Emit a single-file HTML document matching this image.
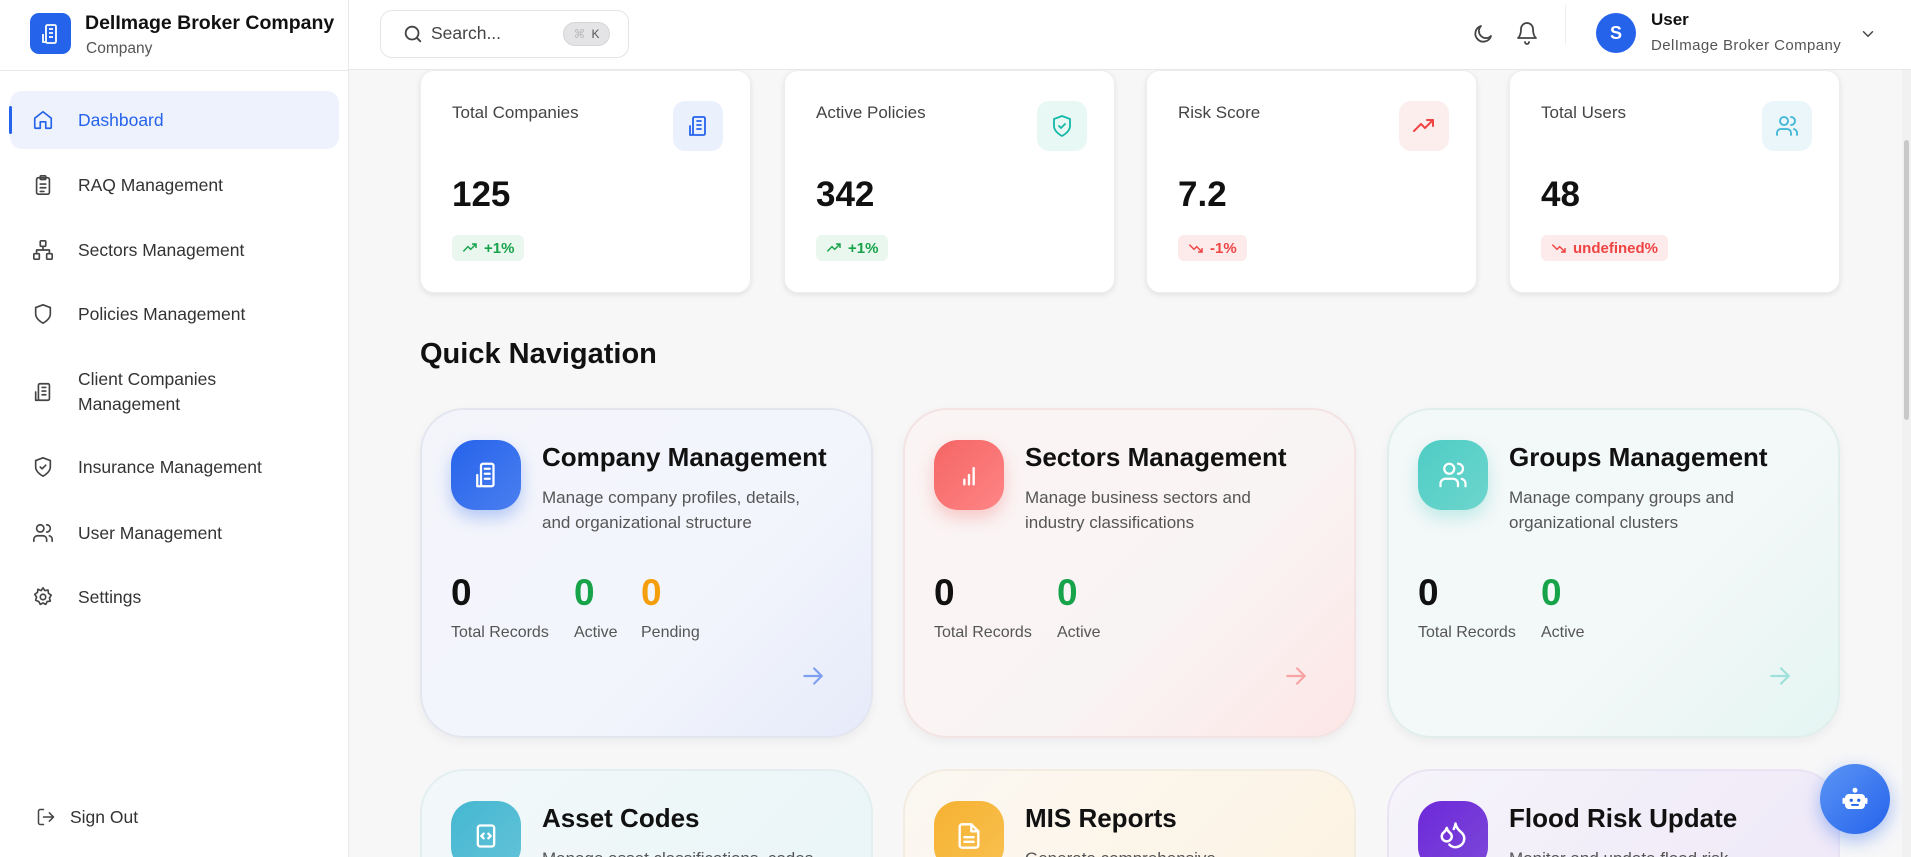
<!DOCTYPE html>
<html style="width:1911px;height:857px;overflow:hidden"><head><meta charset="utf-8"><style>
*{box-sizing:border-box;margin:0;padding:0}
body{width:1911px;height:857px;overflow:hidden;font-family:"Liberation Sans",sans-serif;background:#f7f7f8;position:relative;color:#111}
#w{position:absolute;left:0;top:0;width:1911px;height:857px;overflow:hidden}
.a{position:absolute}
.sb{left:0;top:0;width:349px;height:857px;background:#fff;border-right:1px solid #e8e8ea}
.hd{left:349px;top:0;width:1562px;height:70px;background:#fff;border-bottom:1px solid #e8e8ea;z-index:5}
.nav{left:10px;width:329px;height:58px;display:flex;align-items:center;padding-left:22px;font-size:17.5px;color:#333}
.nav svg{width:22px;height:22px;margin-right:24px;stroke:#444;fill:none;stroke-width:1.8;stroke-linecap:round;stroke-linejoin:round}
.sc{width:331px;height:223px;top:70px;background:#fff;border-radius:14px;box-shadow:0 2px 6px rgba(0,0,0,.09);border:1px solid #eee}
.sc .l{position:absolute;left:31px;top:32px;font-size:17px;color:#444}
.sc .n{position:absolute;left:31px;top:104px;font-size:35px;font-weight:bold}
.sc .ib{position:absolute;left:252px;top:30px;width:50px;height:50px;border-radius:12px;display:flex;align-items:center;justify-content:center}
.sc .bd{position:absolute;left:31px;top:164px;height:26px;border-radius:6px;padding:0 10px;font-size:15px;font-weight:bold;display:flex;align-items:center;gap:6px}
.ib svg,.ic svg{fill:none;stroke-linecap:round;stroke-linejoin:round}
.qc{width:453px;height:330px;border-radius:44px;border:2px solid #e4e6ef;box-shadow:0 4px 10px rgba(0,0,0,.05);overflow:hidden}
.qc.b{height:88px;border-bottom:none;border-radius:44px 44px 0 0;box-shadow:none}
.qc .ic{position:absolute;left:29px;top:30px;width:70px;height:70px;border-radius:24px;display:flex;align-items:center;justify-content:center}
.qc .t{position:absolute;left:120px;top:32px;font-size:26px;font-weight:bold;color:#111}
.qc .d{position:absolute;left:120px;top:75px;font-size:17px;line-height:25px;color:#555;width:285px}
.qc .v{position:absolute;top:162px;font-size:37px;font-weight:bold}
.qc .k{position:absolute;top:214px;font-size:16px;color:#555}
.qc .ar{position:absolute;left:378px;top:253px}
</style></head><body><div id="w">
<div class="a sb">
 <div class="a" style="left:0;top:70px;width:349px;border-top:1px solid #e8e8ea"></div>
 <div class="a" style="left:30px;top:13px;width:41px;height:41px;background:#2563eb;border-radius:9px;display:flex;align-items:center;justify-content:center"><svg width="24" height="24" viewBox="0 0 24 24" fill="none" stroke="#fff" stroke-width="1.8"><rect x="7" y="3" width="10" height="18" rx="1.5"/><path d="M4 12v8h3M10 7h4M10 11h4M10 15h4"/></svg></div>
 <div class="a" style="left:85px;top:12px;font-size:19.5px;font-weight:bold">DelImage Broker Company</div>
 <div class="a" style="left:86px;top:40px;font-size:15.5px;color:#555">Company</div>
 <div class="a nav" style="top:91px;background:#eef2fc;border-radius:12px;color:#2563eb"><svg viewBox="0 0 24 24" style="stroke:#2563eb"><path d="M3 10l9-7 9 7v10a1 1 0 0 1-1 1h-5v-7h-6v7H4a1 1 0 0 1-1-1z"/></svg>Dashboard</div>
 <div class="a" style="left:9px;top:106px;width:3px;height:28px;background:#2563eb;border-radius:2px"></div>
 <div class="a nav" style="top:156px"><svg viewBox="0 0 24 24"><rect x="5" y="4" width="14" height="18" rx="2"/><rect x="9" y="2" width="6" height="4" rx="1"/><path d="M9 11h6M9 15h6M9 19h4"/></svg>RAQ Management</div>
 <div class="a nav" style="top:221px"><svg viewBox="0 0 24 24"><rect x="9" y="2" width="6" height="6" rx="1"/><rect x="2" y="16" width="6" height="6" rx="1"/><rect x="16" y="16" width="6" height="6" rx="1"/><path d="M5 16v-4h14v4M12 8v4"/></svg>Sectors Management</div>
 <div class="a nav" style="top:285px"><svg viewBox="0 0 24 24"><path d="M12 22s8-4 8-10V5l-8-3-8 3v7c0 6 8 10 8 10z"/></svg>Policies Management</div>
 <div class="a nav" style="top:364px;height:55px;line-height:25px"><svg viewBox="0 0 24 24"><rect x="7" y="3" width="12" height="18" rx="1.5"/><path d="M4 12v9h3M11 7h4M11 11h4M11 15h4"/></svg><span>Client Companies<br>Management</span></div>
 <div class="a nav" style="top:438px"><svg viewBox="0 0 24 24"><path d="M12 22s8-4 8-10V5l-8-3-8 3v7c0 6 8 10 8 10z"/><path d="M9 12l2 2 4-4"/></svg>Insurance Management</div>
 <div class="a nav" style="top:504px"><svg viewBox="0 0 24 24"><circle cx="9" cy="7" r="4"/><path d="M2 21v-2a4 4 0 0 1 4-4h6a4 4 0 0 1 4 4v2M16 3a4 4 0 0 1 0 8M22 21v-2a4 4 0 0 0-3-3.9"/></svg>User Management</div>
 <div class="a nav" style="top:568px"><svg viewBox="0 0 24 24"><circle cx="12" cy="12" r="3"/><path d="M12 2l2 3 3.5-.5.5 3.5 3 2-2 3 1 3.5-3.5.5-1.5 3-3-1.5-3 1.5-1.5-3L4 15.5l1-3.5-2-3 3-2 .5-3.5L10 5z"/></svg>Settings</div>
 <div class="a nav" style="top:788px;padding-left:26px"><svg viewBox="0 0 24 24" style="margin-right:14px;width:20px"><path d="M9 21H5a2 2 0 0 1-2-2V5a2 2 0 0 1 2-2h4M16 17l5-5-5-5M21 12H9"/></svg>Sign Out</div>
</div>
<div class="a hd">
 <div class="a" style="left:31px;top:10px;width:249px;height:48px;border:1px solid #e5e5e7;border-radius:12px"></div>
 <svg class="a" style="left:53px;top:23px" width="22" height="22" viewBox="0 0 24 24" fill="none" stroke="#444" stroke-width="2" stroke-linecap="round"><circle cx="11" cy="11" r="7"/><path d="M20 20l-4-4"/></svg>
 <div class="a" style="left:82px;top:23px;font-size:17.5px;color:#444">Search...</div>
 <div class="a" style="left:214px;top:22px;width:47px;height:24px;background:#e4e4e6;border-radius:12px;font-size:12px;color:#555;display:flex;align-items:center;justify-content:center;gap:6px;border:1px solid #d6d6d8"><span style="color:#bbb">⌘</span>K</div>
 <svg class="a" style="left:1122px;top:22px" width="24" height="24" viewBox="0 0 24 24" fill="none" stroke="#444" stroke-width="1.8" stroke-linecap="round" stroke-linejoin="round"><path d="M20 14A8 8 0 1 1 10 4a6 6 0 0 0 10 10z"/></svg>
 <svg class="a" style="left:1166px;top:21px" width="24" height="24" viewBox="0 0 24 24" fill="none" stroke="#444" stroke-width="1.8" stroke-linecap="round" stroke-linejoin="round"><path d="M6 8a6 6 0 0 1 12 0c0 7 3 9 3 9H3s3-2 3-9M10 21a2 2 0 0 0 4 0"/></svg>
 <div class="a" style="left:1216px;top:5px;width:1px;height:40px;background:#eee"></div>
 <div class="a" style="left:1247px;top:13px;width:40px;height:40px;border-radius:50%;background:#2563eb;color:#fff;font-weight:bold;font-size:18px;display:flex;align-items:center;justify-content:center">S</div>
 <div class="a" style="left:1302px;top:10px;font-size:17px;font-weight:bold">User</div>
 <div class="a" style="left:1302px;top:37px;font-size:15px;color:#555;letter-spacing:.4px">DelImage Broker Company</div>
 <svg class="a" style="left:1510px;top:25px" width="18" height="18" viewBox="0 0 24 24" fill="none" stroke="#444" stroke-width="2" stroke-linecap="round"><path d="M6 9l6 6 6-6"/></svg>
</div>

<div class="a sc" style="left:420px"><div class="l">Total Companies</div><div class="ib" style="background:#eaf0fc"><svg width="24" height="24" viewBox="0 0 24 24" stroke="#2563eb" stroke-width="1.8"><rect x="7" y="3" width="12" height="18" rx="1.5"/><path d="M4 12v9h3M11 7h4M11 11h4M11 15h4"/></svg></div><div class="n">125</div><div class="bd" style="background:#e9f7ee;color:#16a34a"><svg width="16" height="16" viewBox="0 0 24 24" fill="none" stroke="#16a34a" stroke-width="2.2"><path d="M2 17l7-7 4 4 8-8M15 6h6v6"/></svg>+1%</div></div>
<div class="a sc" style="left:784px"><div class="l">Active Policies</div><div class="ib" style="background:#e8f8f5"><svg width="24" height="24" viewBox="0 0 24 24" stroke="#14b8a6" stroke-width="1.8"><path d="M12 22s8-4 8-10V5l-8-3-8 3v7c0 6 8 10 8 10z"/><path d="M9 12l2 2 4-4"/></svg></div><div class="n">342</div><div class="bd" style="background:#e9f7ee;color:#16a34a"><svg width="16" height="16" viewBox="0 0 24 24" fill="none" stroke="#16a34a" stroke-width="2.2"><path d="M2 17l7-7 4 4 8-8M15 6h6v6"/></svg>+1%</div></div>
<div class="a sc" style="left:1146px"><div class="l">Risk Score</div><div class="ib" style="background:#fdeeee"><svg width="24" height="24" viewBox="0 0 24 24" stroke="#ef4444" stroke-width="2"><path d="M2 17l7-7 4 4 8-8M15 6h6v6"/></svg></div><div class="n">7.2</div><div class="bd" style="background:#fdeaea;color:#ef4444"><svg width="16" height="16" viewBox="0 0 24 24" fill="none" stroke="#ef4444" stroke-width="2.2"><path d="M2 7l7 7 4-4 8 8M15 18h6v-6"/></svg>-1%</div></div>
<div class="a sc" style="left:1509px"><div class="l">Total Users</div><div class="ib" style="background:#eaf6fa"><svg width="24" height="24" viewBox="0 0 24 24" stroke="#3bb5d6" stroke-width="1.8"><circle cx="9" cy="7" r="4"/><path d="M2 21v-2a4 4 0 0 1 4-4h6a4 4 0 0 1 4 4v2M16 3a4 4 0 0 1 0 8M22 21v-2a4 4 0 0 0-3-3.9"/></svg></div><div class="n">48</div><div class="bd" style="background:#fdeaea;color:#ef4444"><svg width="16" height="16" viewBox="0 0 24 24" fill="none" stroke="#ef4444" stroke-width="2.2"><path d="M2 7l7 7 4-4 8 8M15 18h6v-6"/></svg>undefined%</div></div>

<div class="a" style="left:420px;top:338px;font-size:29px;font-weight:bold">Quick Navigation</div>

<div class="a qc" style="left:420px;top:408px;background:linear-gradient(135deg,#f4f5fb,#f3f5fc 60%,#e6ebfa)">
 <div class="ic" style="background:linear-gradient(135deg,#2563eb,#4b7ff0);box-shadow:0 8px 16px rgba(37,99,235,.3)"><svg width="30" height="30" viewBox="0 0 24 24" stroke="#fff" stroke-width="1.8"><rect x="8" y="3" width="10" height="18" rx="1.5"/><path d="M5 12v9h3M11 7h4M11 11h4M11 15h4"/></svg></div>
 <div class="t">Company Management</div><div class="d">Manage company profiles, details, and organizational structure</div>
 <div class="v" style="left:29px">0</div><div class="v" style="left:152px;color:#16a34a">0</div><div class="v" style="left:219px;color:#f59e0b">0</div>
 <div class="k" style="left:29px">Total Records</div><div class="k" style="left:152px">Active</div><div class="k" style="left:219px">Pending</div>
 <svg class="ar" width="26" height="26" viewBox="0 0 24 24" fill="none" stroke="#7fa0f0" stroke-width="2" stroke-linecap="round"><path d="M4 12h16M13 5l7 7-7 7"/></svg>
</div>
<div class="a qc" style="left:903px;top:408px;background:linear-gradient(135deg,#fbf4f4,#f9f4f4 60%,#fde6e6);border-color:#f3e3e3">
 <div class="ic" style="background:linear-gradient(135deg,#f56565,#ff8585);box-shadow:0 8px 16px rgba(245,101,101,.3)"><svg width="28" height="28" viewBox="0 0 24 24" stroke="#fff" stroke-width="2"><path d="M8 20v-4M12 20v-8M16 20V6"/></svg></div>
 <div class="t">Sectors Management</div><div class="d">Manage business sectors and industry classifications</div>
 <div class="v" style="left:29px">0</div><div class="v" style="left:152px;color:#16a34a">0</div>
 <div class="k" style="left:29px">Total Records</div><div class="k" style="left:152px">Active</div>
 <svg class="ar" width="26" height="26" viewBox="0 0 24 24" fill="none" stroke="#f7a3a3" stroke-width="2" stroke-linecap="round"><path d="M4 12h16M13 5l7 7-7 7"/></svg>
</div>
<div class="a qc" style="left:1387px;top:408px;background:linear-gradient(135deg,#f3f8f8,#f3f8f8 60%,#e4f5f2);border-color:#e0eeec">
 <div class="ic" style="background:linear-gradient(135deg,#4ecdc4,#6dd5cd);box-shadow:0 8px 16px rgba(78,205,196,.3)"><svg width="30" height="30" viewBox="0 0 24 24" stroke="#fff" stroke-width="1.8"><circle cx="9" cy="7" r="4"/><path d="M2 21v-2a4 4 0 0 1 4-4h6a4 4 0 0 1 4 4v2M16 3a4 4 0 0 1 0 8M22 21v-2a4 4 0 0 0-3-3.9"/></svg></div>
 <div class="t">Groups Management</div><div class="d">Manage company groups and organizational clusters</div>
 <div class="v" style="left:29px">0</div><div class="v" style="left:152px;color:#16a34a">0</div>
 <div class="k" style="left:29px">Total Records</div><div class="k" style="left:152px">Active</div>
 <svg class="ar" width="26" height="26" viewBox="0 0 24 24" fill="none" stroke="#9ee0da" stroke-width="2" stroke-linecap="round"><path d="M4 12h16M13 5l7 7-7 7"/></svg>
</div>

<div class="a qc b" style="left:420px;top:769px;background:linear-gradient(135deg,#f3f8f9,#eaf6f8);border-color:#e3eef0">
 <div class="ic" style="background:linear-gradient(135deg,#45b7d1,#62c3d8)"><svg width="28" height="28" viewBox="0 0 24 24" stroke="#fff" stroke-width="2"><rect x="5" y="3" width="14" height="18" rx="2"/><path d="M10 10l-2 2 2 2M14 10l2 2-2 2"/></svg></div>
 <div class="t">Asset Codes</div><div class="d" style="width:320px">Manage asset classifications, codes</div>
</div>
<div class="a qc b" style="left:903px;top:769px;background:linear-gradient(135deg,#fbf8f2,#fdf3e4);border-color:#f3ece0">
 <div class="ic" style="background:linear-gradient(135deg,#f6b232,#f8c04f)"><svg width="28" height="28" viewBox="0 0 24 24" stroke="#fff" stroke-width="2"><path d="M14 2H6a2 2 0 0 0-2 2v16a2 2 0 0 0 2 2h12a2 2 0 0 0 2-2V8z"/><path d="M14 2v6h6M8 13h8M8 17h8"/></svg></div>
 <div class="t">MIS Reports</div><div class="d">Generate comprehensive</div>
</div>
<div class="a qc b" style="left:1387px;top:769px;background:linear-gradient(135deg,#f6f4fa,#efe9f8);border-color:#e9e3f3">
 <div class="ic" style="background:linear-gradient(135deg,#6d28d9,#7c48d8)"><svg width="30" height="30" viewBox="0 0 24 24" stroke="#fff" stroke-width="2"><path d="M7 16.3c2.2 0 4-1.8 4-4 0-1.2-.6-2.2-1.8-3.2S7.2 6.7 7 5.5c-.3 1.2-1 2.4-2.2 3.4S3 11.1 3 12.3c0 2.2 1.8 4 4 4z"/><path d="M12.6 6.4A11 11 0 0 0 14 2c.5 2.5 2 4.9 4 6.5s3 3.5 3 5.5a7 7 0 0 1-11.9 4.9"/></svg></div>
 <div class="t">Flood Risk Update</div><div class="d">Monitor and update flood risk</div>
</div>

<div class="a" style="left:1820px;top:764px;width:70px;height:70px;border-radius:50%;background:linear-gradient(135deg,#5b95f5,#2563eb);box-shadow:0 6px 18px rgba(37,99,235,.4);display:flex;align-items:center;justify-content:center"><svg width="30" height="30" viewBox="0 0 24 24" fill="#fff"><rect x="4" y="8" width="16" height="12" rx="3"/><rect x="2" y="11" width="2" height="5" rx="1"/><rect x="20" y="11" width="2" height="5" rx="1"/><circle cx="12" cy="5" r="2"/><circle cx="9" cy="13" r="1.3" fill="#2563eb"/><circle cx="15" cy="13" r="1.3" fill="#2563eb"/><rect x="9" y="16" width="6" height="1.5" fill="#2563eb"/></svg></div>
<div class="a" style="left:1902px;top:70px;width:9px;height:787px;background:#f1f1f1"></div>
<div class="a" style="left:1904px;top:140px;width:5px;height:280px;background:#c8c8c8;border-radius:3px"></div>
</div></body></html>
